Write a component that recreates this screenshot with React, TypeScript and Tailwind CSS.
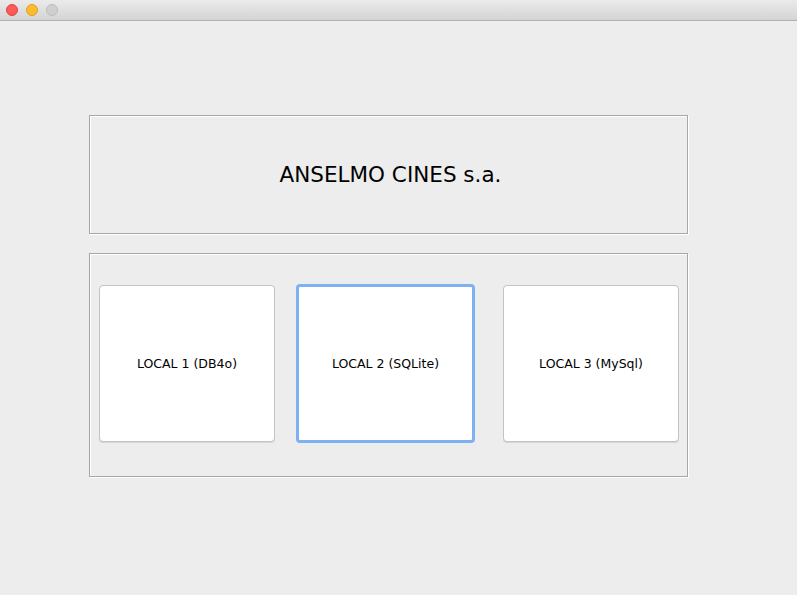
import React from "react";

function Btn({ label, focused }: { label: string; focused?: boolean }) {
  return (
    <div
      className={
        "flex items-center justify-center bg-white rounded-[4px] text-[12.5px] text-black pt-[2px] " +
        (focused
          ? "w-[179px] h-[159px] border-[3px] border-[#7eb0f2]"
          : "w-[176px] h-[157px] border border-[#c3c3c3] shadow-[0_1px_0_#d6d6d6]")
      }
      style={{ fontFamily: '"DejaVu Sans", sans-serif' }}
    >
      {label}
    </div>
  );
}

export default function App() {
  return (
    <div className="w-[797px] h-[595px] bg-[#ededed] overflow-hidden" style={{ fontFamily: '"DejaVu Sans", sans-serif' }}>
      <div className="h-[21px] border-b border-[#b1b1b1] bg-gradient-to-b from-[#ebebeb] to-[#d4d4d4] flex items-center pl-[6px] gap-[8px]">
        <div className="w-[12px] h-[12px] rounded-full bg-[#fc5b57] border border-[#e0443e]" />
        <div className="w-[12px] h-[12px] rounded-full bg-[#fdbc2e] border border-[#dea123]" />
        <div className="w-[12px] h-[12px] rounded-full bg-[#cfcfcf] border border-[#bdbdbd]" />
      </div>
      <div className="pl-[89px] pt-[94px]">
        <div className="w-[599px] h-[119px] border border-[#a7a7a7] shadow-[1px_1px_0_#ffffff,inset_1px_1px_0_#ffffff] flex items-center justify-center text-[21.5px] text-black pl-[4px] pt-[2px]">
          ANSELMO CINES s.a.
        </div>
        <div className="mt-[19px] w-[599px] h-[224px] border border-[#a7a7a7] shadow-[1px_1px_0_#ffffff,inset_1px_1px_0_#ffffff] pl-[9px] pt-[31px] flex items-start">
          <Btn label="LOCAL 1 (DB4o)" />
          <div className="ml-[21px] -mt-[1px]">
            <Btn label="LOCAL 2 (SQLite)" focused />
          </div>
          <div className="ml-[28px]">
            <Btn label="LOCAL 3 (MySql)" />
          </div>
        </div>
      </div>
    </div>
  );
}
